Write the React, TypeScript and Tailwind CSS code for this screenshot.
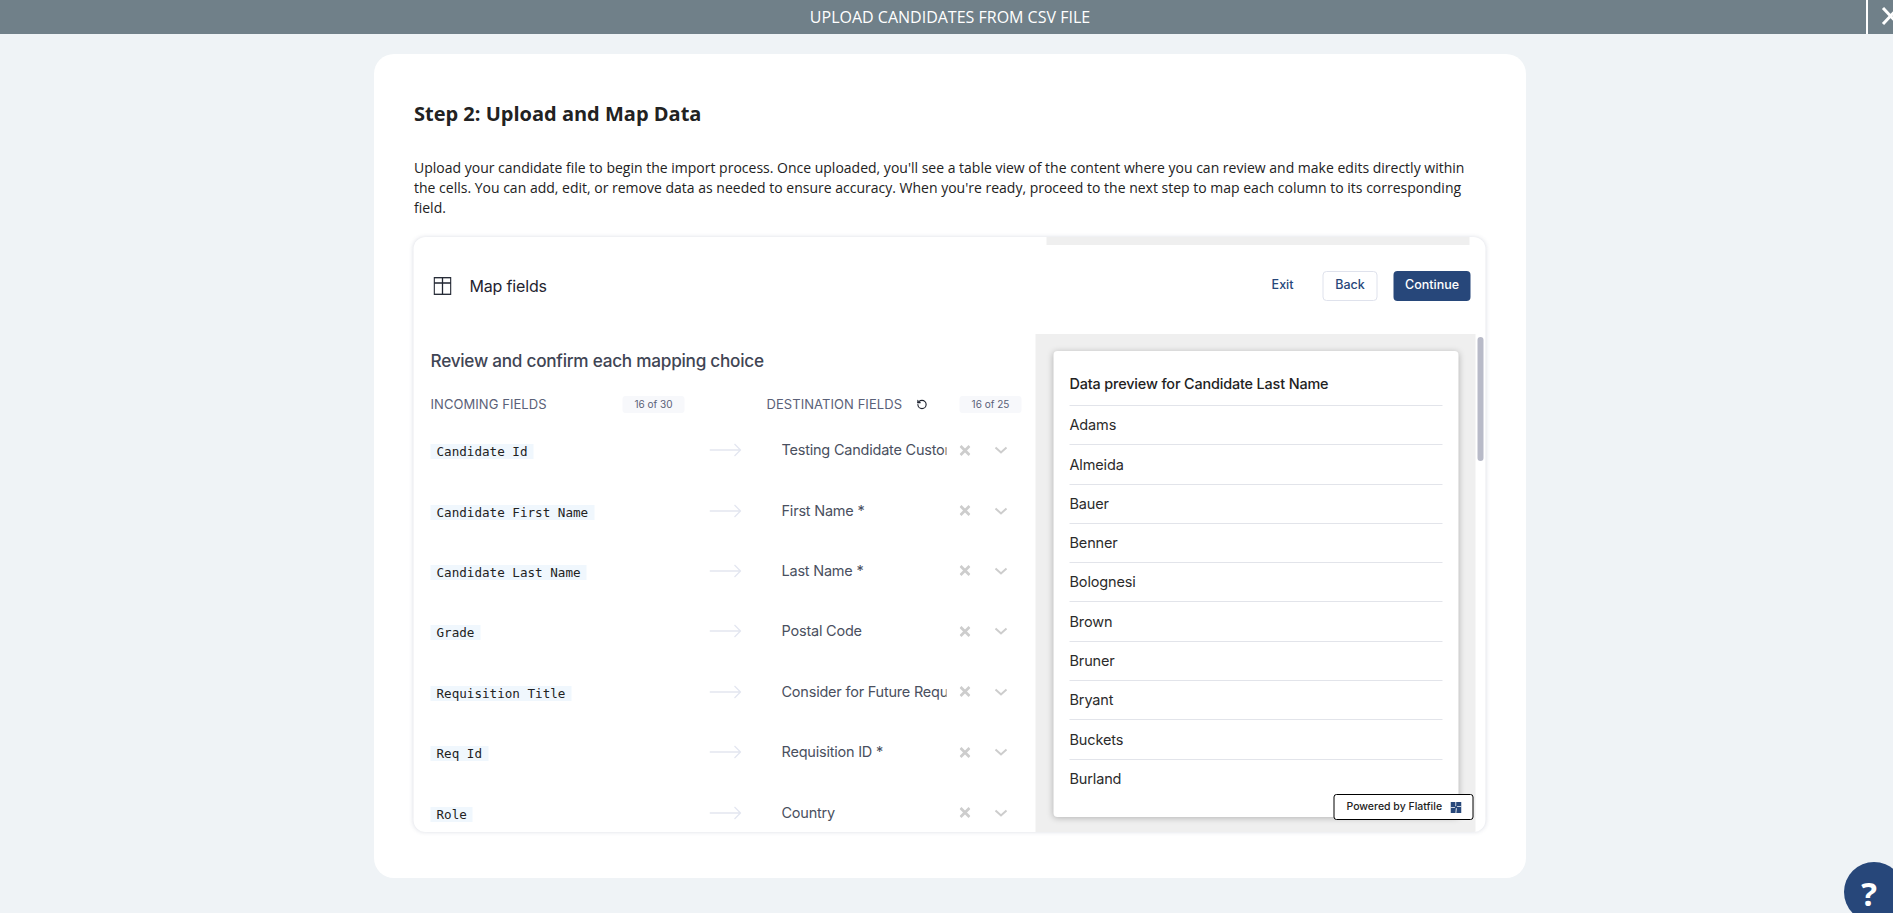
import { RotateCcw } from 'lucide-react'

const MAPPINGS = [
  { source: 'Candidate Id', target: 'Testing Candidate Custom Field' },
  { source: 'Candidate First Name', target: 'First Name *' },
  { source: 'Candidate Last Name', target: 'Last Name *' },
  { source: 'Grade', target: 'Postal Code' },
  { source: 'Requisition Title', target: 'Consider for Future Requisitions' },
  { source: 'Req Id', target: 'Requisition ID *' },
  { source: 'Role', target: 'Country' },
]

const PREVIEW = ['Adams', 'Almeida', 'Bauer', 'Benner', 'Bolognesi', 'Brown', 'Bruner', 'Bryant', 'Buckets', 'Burland']

export default function App() {
  return (
    <div className="relative h-[913px] w-full overflow-hidden bg-[#eff3f6] font-['Open_Sans',sans-serif]">
      <header className="relative flex h-[34px] items-center justify-center overflow-hidden bg-[#708089] pl-[7px] text-base leading-none text-white">
        UPLOAD CANDIDATES FROM CSV FILE
        <button className="absolute left-[1866px] top-0 flex h-[34px] w-[46px] items-center justify-center border-l-2 border-white pb-[2px] pl-[1px]">
          <svg className="h-[19px] w-[19px]" viewBox="0 0 19 19" fill="none" stroke="#fff" strokeWidth={3}>
            <path d="M2 1l15 16M17 1L2 17" />
          </svg>
        </button>
      </header>

      <main className="ml-[374px] mt-5 h-[824px] w-[1152px] rounded-[20px] bg-white px-10 pt-[46px]">
        <h1 className="text-xl font-bold leading-7 text-[#222]">Step 2: Upload and Map Data</h1>
        <p className="mt-[30px] text-sm leading-5 text-[#222]">
          Upload your candidate file to begin the import process. Once uploaded, you'll see a table view of the content where you can review and make edits directly within the cells. You can add, edit, or remove data as needed to ensure accuracy. When you're ready, proceed to the next step to map each column to its corresponding field.
        </p>
        <MapFields />
      </main>

      <div className="absolute left-[1844px] top-[862px] flex h-[60px] w-[60px] items-center justify-center rounded-full bg-[#27477a] pr-[10px] pt-[2px] text-[33px] font-bold leading-none text-white">
        ?
      </div>
    </div>
  )
}

function MapFields() {
  return (
    <section className="relative mt-[19px] flex h-[595px] w-[1072px] -translate-x-[0.5px] flex-col overflow-hidden rounded-xl bg-white font-['Inter',sans-serif] shadow-[0_0_4px_rgba(60,70,110,0.18)]">
      {/* strip left over from the embed's scroll area */}
      <div className="ml-[633px] h-2 w-[423px] bg-[#efefef]" />

      <div className="flex h-[89px] shrink-0 items-center pb-2 pl-5 pr-[15px]">
        <TableIcon />
        <span className="ml-[18px] text-base tracking-[-0.01em] text-[#1f2430]">Map fields</span>
        <span className="ml-auto text-[12.5px] font-medium text-[#27477a]">Exit</span>
        <button className="ml-[29px] h-[30px] w-[55px] rounded-[4px] border border-[#dfe2ec] text-[12.5px] font-medium text-[#27477a]">Back</button>
        <button className="ml-4 h-[30px] w-[77px] rounded-[4px] bg-[#27477a] text-[12.5px] font-medium text-white">Continue</button>
      </div>

      <div className="flex min-h-0 flex-1">
        <div className="w-[622px] shrink-0 overflow-hidden pl-[17px] pt-[13px]">
          <h2 className="text-[17.2px] font-medium leading-7 tracking-[-0.015em] text-[#3f4554]">Review and confirm each mapping choice</h2>
          <div className="mt-[21px] flex h-[17px] items-center text-[13px] tracking-[0.005em] text-[#5a6178]">
            <span className="w-[192px]">INCOMING FIELDS</span>
            <CountBadge>16 of 30</CountBadge>
            <span className="ml-[82px] w-[136px] whitespace-nowrap">DESTINATION FIELDS</span>
            <RotateCcw className="ml-[14px] h-[11px] w-[11px] text-[#1f2430]" strokeWidth={2.5} />
            <span className="ml-[32px]"><CountBadge>16 of 25</CountBadge></span>
          </div>
          <div className="mt-[7px]">
            {MAPPINGS.map(row => (
              <MappingRow key={row.source} source={row.source} target={row.target} />
            ))}
          </div>
        </div>

        <div className="w-[440px] shrink-0 bg-[#efefef] pl-[18px] pr-[17px] pt-[17px]">
          <div className="h-[466px] overflow-hidden rounded bg-white px-4 pt-[17px] shadow-[0_1px_6px_rgba(0,0,0,0.25)]">
            <div className="flex h-[38px] items-center border-b border-[#e2e4ea] pb-[5px] text-[14.4px] font-medium tracking-[-0.01em] text-[#222]">
              Data preview for Candidate Last Name
            </div>
            {PREVIEW.map(name => (
              <div key={name} className="flex h-[39.3px] items-center border-b border-[#e2e4ea] text-[14.5px] tracking-[-0.01em] text-[#2b2b2b] last:border-b-0">
                {name}
              </div>
            ))}
          </div>
        </div>
      </div>

      {/* scrollbar thumb */}
      <div className="absolute left-[1064px] top-[100px] h-[124px] w-[6px] rounded-[3px] bg-[#b8bac8]" />

      <div className="absolute left-[920px] top-[557px] flex h-[26px] w-[140px] items-center rounded-[3px] border-[1.5px] border-black bg-white pl-[12px] text-[10.5px] font-medium text-[#222]">
        Powered by Flatfile
        <FlatfileLogo />
      </div>
    </section>
  )
}

function MappingRow({ source, target }: { source: string; target: string }) {
  return (
    <div className="flex h-[60.4px] items-center">
      <div className="w-[279px] shrink-0">
        <code className="inline-block h-[15px] bg-[#f0f7fd] px-[6px] font-['DejaVu_Sans_Mono',monospace] text-[12.6px] leading-[15px] text-[#222]">
          {source}
        </code>
      </div>
      <svg className="h-[14px] w-8 shrink-0" viewBox="0 0 32 14" fill="none" stroke="#e3e6f0" strokeWidth={1.3}>
        <path d="M0 7h31M25 1l6 6-6 6" />
      </svg>
      <div className="ml-[40px] w-[165px] shrink-0 overflow-hidden whitespace-nowrap text-[14.5px] tracking-[-0.015em] text-[#4a5060]">
        {target}
      </div>
      <svg className="ml-[13px] h-[11px] w-[11px] shrink-0" viewBox="0 0 11 11" fill="none" stroke="#cdcdcd" strokeWidth={2.8}>
        <path d="M1 1l9 9M10 1l-9 9" />
      </svg>
      <svg className="ml-[24px] h-[8px] w-[13px] shrink-0" viewBox="0 0 13 8" fill="none" stroke="#cdcdcd" strokeWidth={2}>
        <path d="M1 1.5l5.5 5 5.5-5" />
      </svg>
    </div>
  )
}

function CountBadge({ children }: { children: React.ReactNode }) {
  return (
    <span className="flex h-[17px] w-[62px] items-center justify-center rounded-[3px] bg-[#f7f8fb] text-[10px] tracking-normal text-[#5a6178]">
      {children}
    </span>
  )
}

function TableIcon() {
  return (
    <svg className="h-[18px] w-[18px]" viewBox="0 0 18 18" fill="none" stroke="#1f2430" strokeWidth={1.3}>
      <rect x="0.7" y="0.7" width="16.6" height="16.6" />
      <path d="M0.7 6h16.6M9 0.7v16.6" />
    </svg>
  )
}

function FlatfileLogo() {
  return (
    <svg className="ml-[8px] h-[11px] w-[11px]" viewBox="0 0 11 11">
      <rect width="11" height="11" fill="#27477a" />
      <path d="M4.9 0h.8v3.8l-.8.7zM0 4.9h4.2l.6.8H0zM6.8 4.3H11v.8H6.2zM5.3 6.4l1-.4-.5 5H5z" fill="#fff" />
    </svg>
  )
}
